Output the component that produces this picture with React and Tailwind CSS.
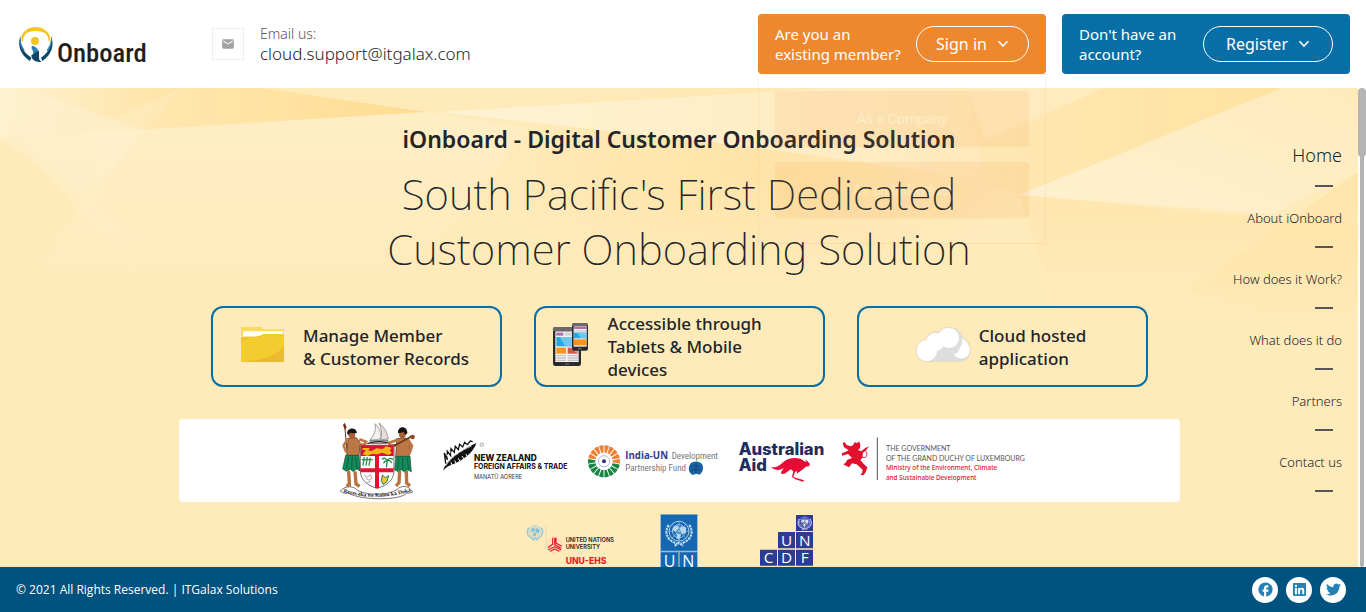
import React from "react";
import { MdEmail, MdFacebook } from "react-icons/md";
import { FaLinkedin, FaTwitter } from "react-icons/fa";

const chevron = (
  <svg viewBox="0 0 12 8" className="w-3 h-2" fill="none" stroke="currentColor" strokeWidth="1.6" aria-hidden="true">
    <path d="M1.5 1.2 6 6l4.500-4.800" />
  </svg>
);

function BrandLogo() {
  return (
    <svg viewBox="54 78 390 111" className="w-[130px] h-[37px]" role="img" aria-label="iOnboard">
      <path d="M61 118C66 94 85 81 107 81s41 13 46 37c-9-17-25-25-46-25s-37 8-46 25Z" fill="#f3c622" />
      <path d="M66 124c1-11 5-20 12-27M149 124c-1-11-5-20-12-27" fill="none" stroke="#f3c622" strokeWidth="5" />
      <path d="M62 108c-10 24-4 54 28 75l4-10c-23-14-35-36-32-65Z" fill="#0d4468" />
      <path d="M153 108c10 24 5 54-26 75l-4-10c22-14 34-36 30-65Z" fill="#0d4468" />
      <path d="M61 112c-4 18 0 30 10 42l3-3c-8-12-12-22-13-39ZM154 112c3 18-2 30-11 42l-3-3c8-12 13-22 14-39Z" fill="#2b80b3" />
      <circle cx="105" cy="123" r="12" fill="#f3c622" />
      <path d="M95 137c11 1 19 8 22 20l-17 7c-1-8 0-14-5-18Z" fill="#2b80b3" />
      <path d="M117 152v22c0 6 3 9 8 11-18 3-31-5-31-19 7-6 14-8 23-14Z" fill="#0d4468" />
      <text x="171" y="185" fontSize="80" fontWeight="500" fill="#231f20" fontFamily="'Roboto Condensed','Liberation Sans Narrow','Open Sans',sans-serif">Onboard</text>
    </svg>
  );
}

function Backdrop() {
  return (
    <svg viewBox="0 0 1358 479" preserveAspectRatio="none" className="absolute inset-0 w-full h-full" aria-hidden="true">
      <defs>
        <linearGradient id="tip" x1="0" x2="1"><stop offset="0" stopColor="#ffe7b0" /><stop offset="1" stopColor="#fedd91" /></linearGradient>
        <linearGradient id="fade" x1="0" y1="0" x2="0" y2="1"><stop offset="0" stopColor="#fff1d0" /><stop offset="1" stopColor="#fff1d0" stopOpacity="0" /></linearGradient>
        <linearGradient id="ray" x1="0" x2="1"><stop offset="0" stopColor="#fff3d6" /><stop offset="1" stopColor="#ffe9b9" /></linearGradient>
        <linearGradient id="pale" x1="1" x2="0" y2="1"><stop offset="0" stopColor="#ffeabb" /><stop offset="1" stopColor="#fff1d1" /></linearGradient>
        <linearGradient id="warm" x1="0" y1="0" x2="0" y2="1"><stop offset="0" stopColor="#fee2a2" /><stop offset="1" stopColor="#fee2a2" stopOpacity="0" /></linearGradient>
        <radialGradient id="glow"><stop offset="0" stopColor="#fee2a2" stopOpacity=".8" /><stop offset="1" stopColor="#fee2a2" stopOpacity="0" /></radialGradient>
        <linearGradient id="corner" x1="0" x2="1"><stop offset="0" stopColor="#fff0cf" /><stop offset="1" stopColor="#fee3a4" /></linearGradient>
      </defs>
      <rect width="1358" height="479" fill="#ffeaba" />
      <path d="M0 0H180L145 42 0 50Z" fill="url(#corner)" />
      <path d="M180 0H262L427 24 145 42Z" fill="url(#tip)" />
      <path d="M0 50 427 24 530 40 400 200H35L85 112Z" fill="url(#fade)" opacity=".5" />
      <path d="M0 0H25L145 42 85 112 240 200H145L28 60 0 15Z" fill="url(#fade)" opacity=".6" />
      <path d="M180 0 30 180 140 200 85 44Z" fill="url(#fade)" opacity=".35" />
      <ellipse cx="760" cy="80" rx="280" ry="110" fill="url(#glow)" />
      <path d="M440 24 830 0H967L985 92 760 60Z" fill="url(#ray)" />
      <path d="M967 0H1282L1019 107 985 95Z" fill="url(#tip)" opacity=".6" />
      <path d="M985 52 1105 0H967Z" fill="#fff0cc" opacity=".5" />
      <path d="M1019 107 1358 138V230H1060Z" fill="url(#warm)" opacity=".45" />
      <path d="M1282 0H1358V84L1273 126 1019 107Z" fill="url(#pale)" />
      <path d="M1358 84 1190 202 1358 260Z" fill="url(#warm)" opacity=".6" />
    </svg>
  );
}

function FolderIcon() {
  return (
    <svg viewBox="120 78 165 114" className="w-[55px] h-[38px] mb-1 shrink-0" aria-hidden="true">
      <path d="M123 81h63v6h66v22H123Z" fill="#fbdd55" />
      <path d="M129 94h120v14H129Z" fill="#fff" />
      <path d="M123 111h60l6-9h63v84H123Z" fill="#f3cc30" />
      <path d="M252 138c-20 28-62 42-127 48h127Z" fill="#ecbb31" />
      <path d="M123 111h60l6-9c-20 12-43 10-66 24Z" fill="#f1c42e" />
    </svg>
  );
}

function DevicesIcon() {
  return (
    <svg viewBox="90 66 144 135" className="w-[48px] h-[45px] mb-1 shrink-0" aria-hidden="true">
      <rect x="93" y="81" width="84" height="117" rx="7" fill="#2b2a2c" />
      <path d="M99 81h71q7 0 7 9v3H93v-3q0-9 6-9Z" fill="#6c696b" />
      <path d="M100 94h70v92h-70Z" fill="#f2f2f2" />
      <path d="M103 98h21v9h-21Z" fill="#b06db1" />
      <path d="M128 98h24v9h-24Z" fill="#d4d3d4" />
      <path d="M103 111h65v28h-65Z" fill="#28a8e0" />
      <path d="M113 111h55v28h-38Z" fill="#71c6ef" />
      <path d="M103 143h29v18h-29Z" fill="#f7931e" />
      <path d="M137 143h31v18h-31Z" fill="#d9534f" />
      <path d="m143 143 25 0v18Z" fill="#ed9197" />
      <path d="M103 167h29m5 0h31M103 174h29m5 0h31M103 181h29m5 0h31" stroke="#c4c4c4" strokeWidth="4" />
      <path d="M129 192h12" stroke="#777" strokeWidth="3" />
      <rect x="150" y="69" width="48" height="83" rx="6" fill="#2b2a2c" />
      <path d="M156 69h36q6 0 6 9h-48q0-9 6-9Z" fill="#6c696b" />
      <path d="M155 79h39v61h-39Z" fill="#f2f2f2" />
      <path d="M155 81h39v6h-39Z" fill="#b06db1" />
      <path d="M155 91h39v4h-39Z" fill="#ccc" />
      <path d="M155 98h39v17h-39Z" fill="#28a8e0" />
      <path d="M166 98h28v17h-17Z" fill="#71c6ef" />
      <path d="M155 118h39v18h-39Z" fill="#f7931e" />
      <path d="M169 146h9" stroke="#888" strokeWidth="3" />
    </svg>
  );
}

function CloudIcon() {
  return (
    <svg viewBox="190 78 168 111" className="w-14 h-[37px] mb-1 shrink-0" aria-hidden="true">
      <path d="M224 185c-18 0-31-13-31-32 0-18 12-32 29-34 5-18 20-27 39-23 7-9 17-14 31-14 24 0 38 14 39 29 15 5 25 19 25 39 0 21-12 35-31 35Z" fill="#ddd" stroke="#f1d9a4" strokeWidth="2" />
      <path d="M224 183c-17 0-29-13-29-30 0-18 12-31 29-32 4-17 21-26 37-20 6-11 17-17 30-17 19 0 31 14 31 31 0 22-24 37-47 24-5 8-12 12-19 13-1 21-15 31-32 31Z" fill="#fff" />
      <path d="M331 115c14 7 23 21 23 36 0 17-14 25-28 24-11-1-18-7-20-16 9 4 13 0 15-8 8-12 12-22 10-36Z" fill="#fff" />
    </svg>
  );
}

function FijiArms() {
  return (
    <svg viewBox="0 12 255 249" className="w-[85px] h-[83px]" role="img" aria-label="Government of Fiji">
      <path d="M119 76h55l-6 10h-43Z" fill="#d8cfc2" stroke="#444" strokeWidth="2" />
      <path d="M135 26c4 18-2 34-15 49 16 0 25-2 33-5 1-17-6-33-18-44Z" fill="#f4f1ec" stroke="#777" strokeWidth="2" />
      <path d="M147 24c8 17 10 32 4 50l24-2c-2-18-12-36-28-48Z" fill="#e4dfd8" stroke="#777" strokeWidth="2" />
      <path d="M112 86q36-12 69 0" fill="none" stroke="#222" strokeWidth="4" />
      <path d="M44 30 61 215" stroke="#66331b" strokeWidth="3" />
      <path d="m39 30 5-7 6 14-5 8Z" fill="#7c2d17" />
      <g>
        <path d="M54 70 79 68 90 82 87 122 50 124Z" fill="#bd7745" stroke="#4c2d1c" strokeWidth="2" />
        <path d="m54 70-13 22 8 20m39-39 20 7-5 10-17-3" fill="none" stroke="#bd7745" strokeWidth="8" />
        <circle cx="66" cy="60" r="10" fill="#a85f32" />
        <path d="M52 57C48 39 78 32 81 54l-8 1-14-2-3 8Z" fill="#171310" />
        <path d="M47 121h40l4 47-12-6-9 8-10-8-10 7-12-7Z" fill="#14895a" stroke="#104c35" strokeWidth="2" />
        <path d="m56 125-6 37m17-37-2 39m12-38 4 36" stroke="#0b6041" strokeWidth="3" />
        <path d="m56 169 2 37-8 8m25-45 3 38 11 7" fill="none" stroke="#b8713f" strokeWidth="10" />
      </g>
      <g>
        <path d="m200 71 27-2 13 19-3 40h-40Z" fill="#bd7745" stroke="#4c2d1c" strokeWidth="2" />
        <path d="m201 75-23 8 1 9 24-2m30-18 13 21-8 24" fill="none" stroke="#bd7745" strokeWidth="8" />
        <circle cx="217" cy="59" r="10" fill="#a85f32" />
        <path d="M204 55c-2-24 29-24 28 0l-6 5-5-9Z" fill="#171310" />
        <path d="M198 124h42l4 46-11-5-9 7-9-8-11 6-10-6Z" fill="#14895a" stroke="#104c35" strokeWidth="2" />
        <path d="m207 128-4 35m15-34v36m14-37 4 34" stroke="#0b6041" strokeWidth="3" />
        <path d="m209 168-2 35-9 10m31-45 1 36 10 9" fill="none" stroke="#b8713f" strokeWidth="10" />
        <path d="m190 94 61-33" stroke="#6d351b" strokeWidth="5" />
        <path d="m241 60 10 4 7-5-7 14-9-2Z" fill="#8b4b24" />
      </g>
      <path d="M91 91h101v78c-2 27-18 41-51 51-32-10-48-25-50-51Z" fill="#fff" stroke="#333" strokeWidth="2" />
      <path d="M92 91h99v32H92Z" fill="#d9122d" />
      <path d="m98 118 10-14 17 4 14-8 19 2 10-8 17 4-5 8 5 9-10 5-18-7-15 5-17-1-13 6Z" fill="#f2b51c" />
      <path d="M98 99h22l-5 6H97Z" fill="#f2b51c" />
      <path d="M135 123h12v97h-12ZM91 160h100v12H91Z" fill="#e31232" />
      <path d="M95 134h33m-25-8-4 26m13-26-4 26m13-24-4 24" stroke="#2a8d50" strokeWidth="4" />
      <path d="m169 157 3-22m-16-2q10-8 16 4 8-12 17-3m-28 11q3-10 12-8 8-3 12 7" fill="none" stroke="#238b4b" strokeWidth="4" />
      <path d="m103 180 9 7 9-8 5 11-9 6-9-6m3 13 11-3" fill="none" stroke="#777" strokeWidth="2" />
      <path d="m157 180 9 8 10-6-5 18-12 8-5-11Z" fill="#efc52d" stroke="#23834a" strokeWidth="3" />
      <path d="M31 228c14-15 31-15 45-8 18 23 109 24 130-1 18-10 33-3 42 12-7 3-13 4-18 3-15 22-134 24-176 0-8 2-15 0-23-6Z" fill="#fff" stroke="#333" strokeWidth="2" />
      <defs><path id="motto" d="M40 232Q142 260 240 230" /></defs>
      <text fontSize="17" fontWeight="700" fill="#222" fontFamily="'Liberation Serif',serif"><textPath href="#motto">Rerevaka na Kalou ka Doka</textPath></text>
    </svg>
  );
}

function NewZealandLogo() {
  return (
    <svg viewBox="303 12 417 249" className="w-[139px] h-[83px]" role="img" aria-label="New Zealand Foreign Affairs and Trade">
      <path d="M339 168c8-30 44-59 100-84-7 25-36 52-78 67-9 4-15 9-22 17Z" fill="#111" />
      <path d="m347 146-4-32 9 20 0-25 10 13 1-21 10 11 3-18 9 10 4-16 9 8 6-14 8 7 9-11 7 2" fill="none" stroke="#111" strokeWidth="4" />
      <path d="M347 153c16-26 42-45 78-60" stroke="#fff" strokeWidth="2" fill="none" />
      <path d="m352 119 5 19m6-26 6 16m7-23 6 13m8-20 5 11m8-17 4 8M366 151l-3-9m15 3-4-9m16 3-5-9m17 2-6-9m16 1-5-7" stroke="#fff" strokeWidth="3" fill="none" />
      <circle cx="455" cy="89" r="5" fill="none" stroke="#777" strokeWidth="2" />
      <g fill="#111" fontFamily="Inter,'Liberation Sans',sans-serif">
        <text x="432" y="137" fontSize="25" fontWeight="800">NEW ZEALAND</text>
        <text x="432" y="163" fontSize="21" fontWeight="700">FOREIGN AFFAIRS &amp; TRADE</text>
        <text x="432" y="192" fontSize="17" fill="#333">MANATŪ AORERE</text>
      </g>
    </svg>
  );
}

const spokes = [0, 1, 2, 3, 4, 5, 6, 7, 8, 9, 10, 11, 12, 13, 14, 15, 16, 17];

function IndiaLogo() {
  return (
    <svg viewBox="48 12 402 249" className="w-[134px] h-[83px]" role="img" aria-label="India-UN Development Partnership Fund">
      {spokes.map((n) => (
        <path key={n} d="M99 113 95 92q7-3 14 0l-4 21Z" fill={n < 5 || n > 13 ? "#ee8137" : "#178541"} transform={`rotate(${n * 20 + 10} 102 139)`} />
      ))}
      <circle cx="102" cy="139" r="17" fill="#fff" stroke="#9494ca" strokeWidth="2" />
      <circle cx="102" cy="139" r="6" fill="#31318b" />
      <g fontFamily="'Open Sans',sans-serif">
        <text x="166" y="132" fontSize="29" fontWeight="700" fill="#38388a">India-UN</text>
        <g fontFamily="'Roboto Condensed','Liberation Sans Narrow','Open Sans',sans-serif" fill="#77777b">
          <text x="305" y="132" fontSize="27">Development</text>
          <text x="166" y="167" fontSize="27">Partnership Fund</text>
        </g>
      </g>
      <path d="M361 146c8-9 28-9 35 1 6 10 4 23-7 32l-10-3-11 4c-14-9-14-23-7-34Z" fill="#1965a5" />
      <path d="M362 158q15-14 31 1m-32 10q18-12 33-1M378 143v31" fill="none" stroke="#164478" strokeWidth="3" />
    </svg>
  );
}

function AustralianAidLogo() {
  return (
    <svg viewBox="498 12 270 249" className="w-[90px] h-[83px]" role="img" aria-label="Australian Aid">
      <g fill="#202c60" fontWeight="800" fontSize="50" fontFamily="Inter,'Liberation Sans',sans-serif">
        <text x="506" y="121">Australian</text>
        <text x="506" y="169">Aid</text>
      </g>
      <path d="M602 155c18 6 27-5 39-15 14-11 34-14 51-8 6 2 11 9 17 9l-3-8 8 7 6 7-3 7-10 1-7 7-12 9-8 6 2-8-7 1-5 16 32 10-2 4-24-7-10-7 4-17-8-6-18 13-9 1-2-5 8-13c-13 9-26 8-39-4Z" fill="#e70a35" />
    </svg>
  );
}

function LuxembourgLogo() {
  return (
    <svg viewBox="36 12 561 249" className="w-[187px] h-[83px]" role="img" aria-label="The Government of the Grand Duchy of Luxembourg">
      <path d="m70 88 5-7 6 4 6-6 4 9-1 11-6 6 10 4 12-10 11-5-8 11-10 8-2 15-6 7 11 13 10 9-5 15-7 9-9-2 5-5 2-10-18-16-14-3-9 12-9-5-8-4 7-5 5-9 14-5-12-12-18 5-10-7 13-1 17-8-14-9-4-12 5-4 7 9 12 4 8-4Z" fill="#e3102d" />
      <path d="M91 125c27 11 22-18 10-21" fill="none" stroke="#e3102d" strokeWidth="3" />
      <path d="M142 67v128" stroke="#555" strokeWidth="3" />
      <g fontFamily="Lato,sans-serif">
        <text x="168" y="108" fontSize="21" fill="#555">THE GOVERNMENT</text>
        <text x="168" y="137" fontSize="21" fill="#555">OF THE GRAND DUCHY OF LUXEMBOURG</text>
        <g fill="#e3102d" fontFamily="'Noto Sans',sans-serif" fontSize="19" fontWeight="500">
          <text x="168" y="166">Ministry of the Environment, Climate</text>
          <text x="168" y="194">and Sustainable Development</text>
        </g>
      </g>
    </svg>
  );
}

function UnEmblem({ x, y, size, color }) {
  return (
    <svg x={x} y={y} width={size} height={size} viewBox="0 0 80 80" fill="none" stroke={color}>
      <circle cx="40" cy="36" r="27" strokeWidth="2.500" />
      <circle cx="40" cy="36" r="18" strokeWidth="2" />
      <circle cx="40" cy="36" r="9" strokeWidth="2" />
      <path d="M40 9v54M13 36h54M21 17l38 38M59 17 21 55" strokeWidth="1.500" />
      <path d="m25 24 12-4 2 9-9 8-8-5ZM45 22l15 4-2 14-8 4-8-12ZM34 42l12 4-5 13-8-4Z" fill={color} stroke="none" />
      <path d="M12 19C-1 39 6 61 35 70M68 19c13 20 6 42-23 51M28 76l12-8 12 8" strokeWidth="6" strokeDasharray="7 2" />
    </svg>
  );
}

function UnuLogo() {
  return (
    <svg viewBox="48 27 330 228" className="w-[110px] h-[76px]" role="img" aria-label="United Nations University UNU-EHS">
      <UnEmblem x="48" y="55" size="54" color="#7dc0dd" />
      <path d="M108 62v73" stroke="#d8d3c5" strokeWidth="2" />
      <path d="M128 98v20l-14 10m20-30v21l19 11M138 98v16l18 10M114 135l20-10 20 10m-34 4 14-7 14 7" fill="none" stroke="#e52b38" strokeWidth="4" />
      <path d="m134 96 21 13v24l-21 14-21-14v-24Z" fill="none" stroke="#f3ae98" strokeWidth="1" />
      <g fontFamily="Inter,'Liberation Sans',sans-serif" fill="#222" fontWeight="600" fontSize="17">
        <text x="167" y="112">UNITED NATIONS</text>
        <text x="167" y="132">UNIVERSITY</text>
        <text x="167" y="176" fill="#e51f2b" fontSize="26" fontWeight="800">UNU-EHS</text>
      </g>
    </svg>
  );
}

function UndpLogo() {
  return (
    <svg viewBox="450 27 228 228" className="w-[76px] h-[76px]" role="img" aria-label="UNDP">
      <path d="M450 27h114v228H450Z" fill="#9bbcd0" />
      <path d="M453 29h108v108H453ZM453 142h52v53h-52ZM509 142h52v53h-52ZM453 199h52v53h-52ZM509 199h52v53h-52Z" fill="#1567b1" />
      <UnEmblem x="463" y="39" size="88" color="#b9d8ee" />
      <g fill="#fff" fontFamily="'Open Sans',sans-serif" fontSize="48" textAnchor="middle">
        <text x="479" y="185">U</text><text x="535" y="185">N</text>
        <text x="479" y="243">D</text><text x="535" y="243">P</text>
      </g>
    </svg>
  );
}

function UncdfLogo() {
  return (
    <svg viewBox="750 27 219 228" className="w-[73px] h-[76px]" role="img" aria-label="UNCDF">
      <path d="M858 30h51v48h-51ZM804 81h51v49h-51ZM858 81h51v49h-51ZM750 134h51v48h-51ZM804 134h51v48h-51ZM858 134h51v48h-51Z" fill="#2d3c90" />
      <UnEmblem x="861" y="31" size="46" color="#dce1f3" />
      <g fill="#fff" fontFamily="'Open Sans',sans-serif" fontSize="46" textAnchor="middle">
        <text x="830" y="122">U</text><text x="884" y="122">N</text>
        <text x="776" y="175">C</text><text x="830" y="175">D</text><text x="884" y="175">F</text>
      </g>
    </svg>
  );
}

function Feature({ icon, children }) {
  return (
    <li className="flex items-center justify-center gap-2 h-[81px] border-2 border-[#086fa6] rounded-xl pl-4 pr-[19px]">
      {icon}
      <p className="text-[17px] leading-[23px] font-medium">{children}</p>
    </li>
  );
}

const links = ["Home", "About iOnboard", "How does it Work?", "What does it do", "Partners", "Contact us"];

export default function App() {
  return (
    <div className="h-screen flex flex-col overflow-hidden bg-white text-[#212529] font-['Noto_Sans','Open_Sans',sans-serif]">
      <header className="relative z-10 h-22 shrink-0 flex items-center px-4 bg-white">
        <a href="#home" className="pl-0.5"><BrandLogo /></a>
        <div className="flex items-center gap-4 ml-16">
          <span className="w-8 h-8 border border-[#eee] flex items-center justify-center text-[#a3a3a3]"><MdEmail size={14} /></span>
          <div>
            <p className="text-sm leading-5 font-light text-[#555]">Email us:</p>
            <a href="mailto:cloud.support@itgalax.com" className="block text-[17px] leading-5 font-light">cloud.support@itgalax.com</a>
          </div>
        </div>
        <div className="flex gap-4 ml-auto text-white text-[15px] leading-5">
          <div className="relative w-72 h-15 rounded-sm bg-[#ee882f] flex items-center justify-between px-[17px]">
            <p>Are you an<br />existing member?</p>
            <button className="flex items-center justify-center gap-2.5 w-[113px] h-9 border border-white rounded-full text-base">Sign in {chevron}</button>
            <div className="absolute top-full left-0 w-full h-[170px] px-4 py-4 flex flex-col gap-[15px] border border-[#ee882f] bg-white/30 opacity-10 font-[Roboto,sans-serif]">
              <button className="h-14 shrink-0 rounded-sm bg-[#ee882f] text-sm shadow">As a Company</button>
              <button className="h-14 shrink-0 rounded-sm bg-[#ee882f] text-sm shadow">As an Individual</button>
            </div>
          </div>
          <div className="w-72 h-15 rounded-sm bg-[#086fa6] flex items-center justify-between px-[17px]">
            <p>Don't have an<br />account?</p>
            <button className="flex items-center justify-center gap-2.5 w-[130px] h-9 border border-white rounded-full text-base">Register {chevron}</button>
          </div>
        </div>
      </header>

      <div className="flex flex-1 min-h-0">
        <main className="relative flex-1 overflow-hidden">
          <Backdrop />
          <div className="relative h-full overflow-y-auto [scrollbar-width:none] grid grid-cols-[1fr_minmax(0,1001px)_1fr]">
            <section className="col-start-2">
              <div className="text-center pt-9">
                <h1 className="text-[23px] leading-[30px] font-semibold">iOnboard - Digital Customer Onboarding Solution</h1>
                <p className="pt-3 text-[42px] leading-[55px] font-extralight">South Pacific's First Dedicated<br />Customer Onboarding Solution</p>
              </div>
              <ul className="grid grid-cols-3 gap-8 px-8 mt-[30px]">
                <Feature icon={<FolderIcon />}>Manage Member<br />&amp; Customer Records</Feature>
                <Feature icon={<DevicesIcon />}>Accessible through Tablets &amp; Mobile devices</Feature>
                <Feature icon={<CloudIcon />}>Cloud hosted<br />application</Feature>
              </ul>
              <div className="mt-8 bg-white rounded flex justify-center gap-4">
                <FijiArms />
                <NewZealandLogo />
                <IndiaLogo />
                <AustralianAidLogo />
                <LuxembourgLogo />
              </div>
              <div className="mt-3 flex justify-center gap-6">
                <UnuLogo />
                <UndpLogo />
                <UncdfLogo />
              </div>
            </section>
            <nav className="pt-[55px] pr-4">
              <ul className="text-right whitespace-nowrap font-light">
                {links.map((label, n) => (
                  <li key={label} className="h-[61px] flex flex-col items-end">
                    <a href={`#section-${n}`} className={n === 0 ? "h-7 text-lg leading-6" : "h-7 text-[13px] leading-7"}>{label}</a>
                    <span className="w-[18px] h-0.5 mt-[14px] mr-[9px] bg-[#555]" />
                  </li>
                ))}
              </ul>
            </nav>
          </div>
        </main>
        <div className="w-2 shrink-0 bg-white flex flex-col items-center" aria-hidden="true">
          <span className="w-2 h-[69px] rounded-full bg-[#b4b4b4]" />
          <span className="w-1 flex-1 -mt-1 rounded-b-full bg-[#b4b4b4]" />
        </div>
      </div>

      <footer className="h-[45px] shrink-0 bg-[#00527f] text-white flex items-center justify-between pl-4 pr-5">
        <p className="text-xs font-['Open_Sans',sans-serif]">© 2021 All Rights Reserved. | ITGalax Solutions</p>
        <div className="flex gap-2 text-[#2580b3]">
          <a href="#facebook" aria-label="Facebook" className="w-[26px] h-[26px] rounded-full bg-white flex items-center justify-center"><MdFacebook size={17} /></a>
          <a href="#linkedin" aria-label="LinkedIn" className="w-[26px] h-[26px] rounded-full bg-white flex items-center justify-center"><FaLinkedin size={15} /></a>
          <a href="#twitter" aria-label="Twitter" className="w-[26px] h-[26px] rounded-full bg-white flex items-center justify-center"><FaTwitter size={15} /></a>
        </div>
      </footer>
    </div>
  );
}
